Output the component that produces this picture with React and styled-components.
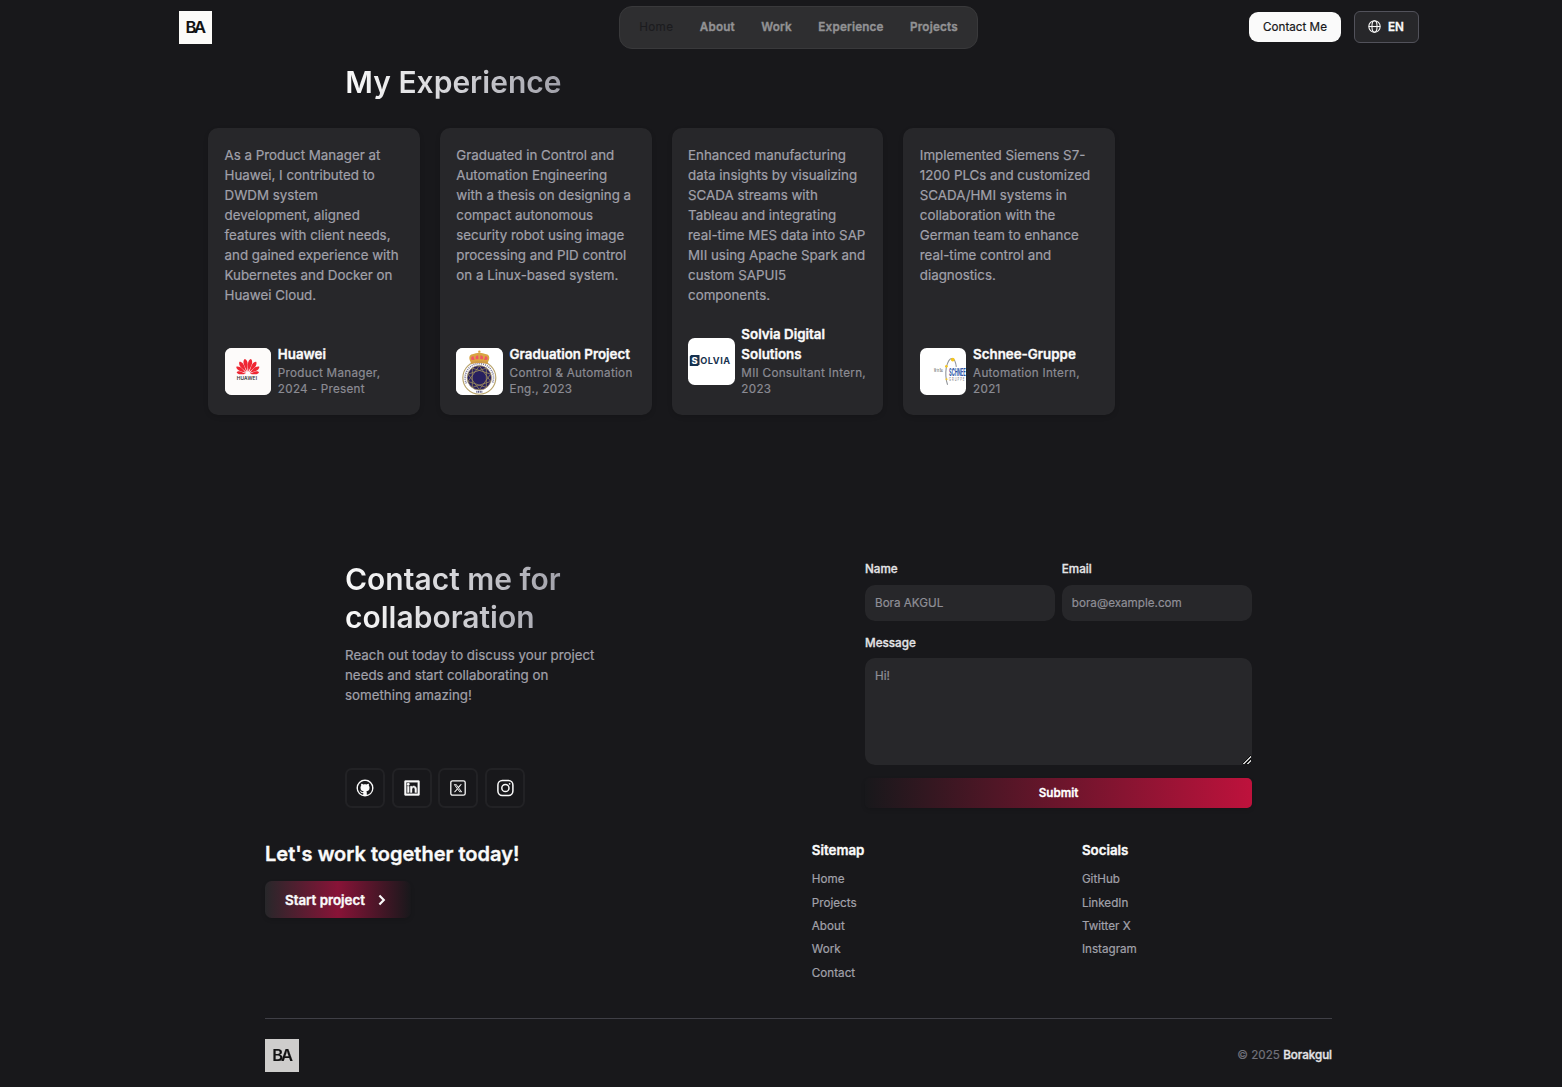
import React from "react";
import styled, { createGlobalStyle, css } from "styled-components";
import { BsGithub, BsTwitterX } from "react-icons/bs";
import { RiLinkedinBoxLine } from "react-icons/ri";

const Global = createGlobalStyle`
  *, *::before, *::after { box-sizing: border-box; }
  body {
    margin: 0;
    background: #18181b;
    color: #fafafa;
    font-family: Inter, "Liberation Sans", sans-serif;
    font-size: 13.333px;
    line-height: 20px;
    overflow: hidden;
    -webkit-text-stroke: 0.2px;
  }
  h1, h2, h3, p, ul { margin: 0; padding: 0; }
  ul { list-style: none; }
  a { color: inherit; text-decoration: none; }
  svg text { -webkit-text-stroke: 0; }
`;

const strong = css`
  font-weight: 600;
  -webkit-text-stroke: 0.35px;
`;

const Page = styled.div`
  width: 1597px;
  height: 1087px;
  display: flex;
  flex-direction: column;
  overflow: hidden;
`;

const Header = styled.header`
  width: 1240px;
  height: 55px;
  margin: 0 auto;
  display: grid;
  grid-template-columns: 1fr auto 1fr;
  align-items: center;
  flex: none;
`;

const LogoBox = styled.a`
  display: flex;
  align-items: center;
  justify-content: center;
  width: ${(p) => (p.$dim ? 34 : 33.33)}px;
  height: 33.33px;
  padding: 0 1px 1px 0;
  background: #fcfbf9;
  color: #111;
  font-size: 16.5px;
  font-weight: 600;
  -webkit-text-stroke: 0.1px;
  letter-spacing: -2.2px;
  opacity: ${(p) => (p.$dim ? 0.8 : 1)};
`;

const Nav = styled.nav`
  display: flex;
  height: 43px;
  padding: 0 6px 2px;
  align-items: center;
  background: #2e2e30;
  border: 1px solid #39393b;
  border-radius: 13px;
`;

const NavLink = styled.a`
  padding: 0 13.2px;
  font-size: 11.667px;
  ${strong}
  letter-spacing: 0.2px;
  color: #929294;
  ${(p) =>
    p.$active &&
    css`
      font-weight: 400;
      letter-spacing: 0.4px;
      color: #1c1c1f;
      -webkit-text-stroke: 0.1px;
    `}
`;

const HeaderActions = styled.div`
  display: flex;
  justify-content: flex-end;
  align-items: center;
  gap: 13px;
  padding-bottom: 1.4px;
`;

const ContactButton = styled.a`
  display: flex;
  align-items: center;
  justify-content: center;
  width: 92px;
  height: 30px;
  padding-left: 1px;
  border-radius: 9px;
  background: #fafafa;
  color: #18181b;
  font-size: 11.667px;
`;

const LangButton = styled.button`
  display: flex;
  align-items: center;
  justify-content: center;
  gap: 7px;
  width: 65px;
  height: 32px;
  padding: 0;
  border: 1px solid #52525b;
  border-radius: 6px;
  background: #27272a;
  color: #fafafa;
  font: 600 11.667px Inter, sans-serif;
  -webkit-text-stroke: 0.3px;
`;

const Title = styled.h2`
  width: fit-content;
  font-size: 30px;
  line-height: 38px;
  font-weight: 600;
  -webkit-text-stroke: 0;
  background: linear-gradient(to right, #fafafa 0%, #d4d4d8 50%, #a1a1aa 100%);
  background-clip: text;
  -webkit-background-clip: text;
  color: transparent;
`;

const Experience = styled.section`
  padding: 8px 0 0 208px;
  height: 505px;
  flex: none;
`;

const ExperienceHead = styled.div`
  padding-left: 137.3px;
`;

const Cards = styled.div`
  display: flex;
  gap: 20px;
  margin-top: 27px;
`;

const Card = styled.article`
  width: 211.75px;
  height: 287px;
  padding: 17px 0 16.67px 16.55px;
  border-radius: 10px;
  background: #27272a;
  box-shadow: 0 2px 5px rgba(0, 0, 0, 0.12);
  display: flex;
  flex-direction: column;
  justify-content: space-between;
`;

const Body = styled.p`
  color: #a1a1aa;
  white-space: pre-line;
`;

const Company = styled.div`
  display: flex;
  align-items: center;
  gap: 6.67px;
`;

const CompanyText = styled.div`
  padding-bottom: 1.33px;
`;

const CompanyLogo = styled.figure`
  flex: none;
  margin: 0;
  width: 46.67px;
  height: 46.67px;
  border-radius: 6.67px;
  overflow: hidden;
  background: #fff;
  svg { display: block; width: 100%; height: 100%; }
`;

const CompanyName = styled.h3`
  font-size: 13.333px;
  line-height: 20px;
  margin-bottom: 1px;
  white-space: pre-line;
  ${strong}
`;

const Role = styled.p`
  font-size: 11.667px;
  line-height: 16px;
  letter-spacing: 0.29px;
  color: #8b8b93;
  white-space: pre-line;
`;

const Contact = styled.section`
  width: 907px;
  height: 248px;
  margin: 0 auto;
  display: flex;
  justify-content: space-between;
  flex: none;
`;

const ContactInfo = styled.div`
  display: flex;
  flex-direction: column;
  justify-content: space-between;
`;

const Reach = styled(Body)`
  margin-top: 9px;
`;

const Socials = styled.div`
  display: flex;
  gap: 6.67px;
`;

const SocialButton = styled.a`
  display: grid;
  place-items: center;
  width: 40px;
  height: 40px;
  border: 2px solid #222225;
  border-radius: 6.67px;
  color: #fafafa;
`;

const Form = styled.form`
  width: 387px;
  display: flex;
  flex-direction: column;
`;

const FieldRow = styled.div`
  display: grid;
  grid-template-columns: 1fr 1fr;
  gap: 6.67px;
  margin-bottom: 13.3px;
`;

const Field = styled.label`
  display: flex;
  flex-direction: column;
  padding-top: 1px;
  font-size: 11.667px;
  line-height: 17px;
  font-weight: 500;
  color: #e4e4e7;
  -webkit-text-stroke: 0.3px;
`;

const control = css`
  display: block;
  width: 100%;
  border: 0;
  outline: 0;
  border-radius: 10px;
  background: #27272a;
  color: #fafafa;
  font: 400 11.667px/17px Inter, sans-serif;
  -webkit-text-stroke: 0.2px;
  &::placeholder { color: #8f8f97; opacity: 1; }
`;

const Input = styled.input`
  ${control}
  height: 36px;
  margin-top: 7px;
  padding: 0 10px;
`;

const TextArea = styled.textarea`
  ${control}
  height: 107px;
  margin-top: 5.7px;
  padding: 10px;
  resize: both;
  &::-webkit-resizer {
    background: linear-gradient(
        135deg,
        transparent 46%,
        #0c0c0d 46%,
        #0c0c0d 54%,
        #c8c8c8 54%,
        #c8c8c8 66%,
        #111 66%,
        #111 76%,
        #c8c8c8 76%,
        #c8c8c8 86%,
        transparent 86%
      )
      5px 5px / 9px 9px no-repeat;
  }
`;

const Submit = styled.button`
  height: 30px;
  margin-top: 13px;
  border: 0;
  border-radius: 5px;
  background: linear-gradient(to right, #18181b, #be123c);
  box-shadow: 0 2px 4px rgba(0, 0, 0, 0.12);
  color: #fff;
  font: 600 11.667px Inter, sans-serif;
  -webkit-text-stroke: 0.3px;
`;

const Footer = styled.footer`
  width: 1067px;
  margin: 0 auto;
  padding-top: 32px;
`;

const FooterTop = styled.div`
  display: grid;
  grid-template-columns: 1fr 1fr;
  gap: 26.67px;
  height: 178px;
`;

const Pitch = styled.h2`
  padding-top: 1px;
  font-size: 20px;
  line-height: 27px;
  ${strong}
`;

const StartButton = styled.a`
  display: flex;
  align-items: center;
  gap: 9px;
  width: 146px;
  height: 37px;
  margin-top: 13px;
  padding-left: 20px;
  border-radius: 6.67px;
  background: linear-gradient(to right, #27272a, #881337 50%, #18181b);
  box-shadow: 0 2px 4px rgba(0, 0, 0, 0.12);
  ${strong}
`;

const LinkColumns = styled.div`
  display: grid;
  grid-template-columns: 1fr 1fr;
  gap: 20px;
`;

const ColumnTitle = styled.h3`
  font-size: 13.333px;
  line-height: 20px;
  margin-bottom: 8.4px;
  ${strong}
`;

const FooterLink = styled.li`
  font-size: 11.667px;
  line-height: 23.33px;
  color: #a1a1aa;
`;

const FooterBottom = styled.div`
  display: flex;
  justify-content: space-between;
  align-items: center;
  border-top: 1px solid #3f3f46;
  padding-top: 20px;
`;

const Copyright = styled.p`
  padding-bottom: 2px;
  font-size: 11.667px;
  color: #71717a;
  span {
    color: #e4e4e7;
    font-weight: 500;
    letter-spacing: -0.05px;
    -webkit-text-stroke: 0.35px;
  }
`;

const Globe = () => (
  <svg width="13" height="13" viewBox="0 0 24 24" fill="none" stroke="currentColor" strokeWidth="2">
    <circle cx="12" cy="12" r="10.5" />
    <ellipse cx="12" cy="12" rx="4.7" ry="10.5" />
    <path d="M1.5 12h21" />
  </svg>
);

const Chevron = () => (
  <svg width="16" height="16" viewBox="0 0 16 16" fill="none" stroke="currentColor" strokeWidth="2.2">
    <path d="M5.4 3.5 9.8 8l-4.4 4.5" />
  </svg>
);

const GithubMark = () => (
  <svg width="18" height="18" viewBox="0 0 18 18">
    <circle cx="9" cy="9" r="8.5" fill="currentColor" />
    <BsGithub x="1.9" y="1.9" size="14.2" color="#18181b" />
  </svg>
);

const XMark = () => (
  <svg width="16" height="16" viewBox="0 0 16 16">
    <rect x="0.8" y="0.8" width="14.4" height="14.4" rx="1.8" fill="none" stroke="currentColor" strokeWidth="1.3" />
    <BsTwitterX x="3.6" y="3.9" size="8.8" color="#fafafa" />
  </svg>
);

const InstagramMark = () => (
  <svg width="18" height="18" viewBox="0 0 18 18" fill="none" stroke="currentColor" strokeWidth="1.5">
    <rect x="1.9" y="1.5" width="15" height="15" rx="4.4" />
    <circle cx="9.4" cy="9" r="3.6" />
    <circle cx="13.6" cy="4.8" r="0.9" fill="currentColor" stroke="none" />
  </svg>
);

const petals = [
  [-80, 0.76],
  [-57, 0.92],
  [-34, 1],
  [-11.5, 1.04],
  [11.5, 1.04],
  [34, 1],
  [57, 0.92],
  [80, 0.76],
];

const HuaweiLogo = () => (
  <svg viewBox="0 0 47 47">
    <rect width="47" height="47" fill="#fdfbfa" />
    {petals.map(([angle, size]) => (
      <path
        key={angle}
        d="M0 -2.5C-.6 -5 -2.4 -8.6 -2.3 -11.4C-2 -13.6 -.8 -14.8 0 -15C.8 -14.8 2 -13.6 2.3 -11.4C2.4 -8.6 .6 -5 0 -2.5Z"
        fill="#ef2733"
        transform={`translate(23 26.4) rotate(${angle}) scale(${size * 0.86} ${size})`}
      />
    ))}
    <text x="11.8" y="32.2" fontSize="4.9" fontWeight="600" letterSpacing=".15" fontFamily="Inter" fill="#333">HUAWEI</text>
  </svg>
);

const star = Array.from({ length: 10 }, (_, i) => {
  const a = (i * 3 * Math.PI) / 5 - Math.PI / 2;
  return `${23.5 + 12 * Math.cos(a)},${30 + 12 * Math.sin(a)}`;
}).join(" ");

const UniversityLogo = () => (
  <svg viewBox="0 0 47 47">
    <rect width="47" height="47" fill="#fff" />
    <circle cx="23.5" cy="30" r="16.6" fill="#fff" stroke="#b9a46c" strokeWidth="1.2" />
    <path d="M10.4 35.7A14.3 14.3 0 1 1 36.6 35.7" fill="none" stroke="#7a789a" strokeWidth="1.7" strokeDasharray="1 1" />
    <circle cx="23.5" cy="30" r="12.3" fill="#28205f" stroke="#b9a46c" strokeWidth=".7" />
    <polygon points={star} fill="none" stroke="#a3935f" strokeWidth=".75" />
    <circle cx="23.5" cy="30" r="3.6" fill="#28205f" />
    <path d="M15 14.6C12.5 10.8 13 7 16.5 6.4C19 5.2 21 5 23.5 4.7C26 5 28 5.2 30.5 6.4C34 7 34.5 10.8 32 14.6Q23.5 12.8 15 14.6Z" fill="#d9a443" />
    <path d="M15.4 11.8Q14.6 8.8 17.4 8L18.8 12ZM20 11.3Q18.8 8.2 22.3 7.4L22.7 11.2ZM24.3 11.2L24.7 7.4Q28.2 8.2 27 11.3ZM28.2 12L29.6 8Q32.4 8.8 31.6 11.8Z" fill="#f05565" />
    <path d="M14.8 14.2Q23.5 12 32.2 14.2L31.8 16Q23.5 14 15.2 16Z" fill="#cf9a45" />
    <circle cx="23.5" cy="3.7" r="1.2" fill="#d9a443" />
    <path d="M20.5 44.1h6" stroke="#4f4c76" strokeWidth="2" strokeDasharray="1.1 .6" />
  </svg>
);

const SolviaLogo = () => (
  <svg viewBox="0 0 47 47">
    <path d="M3.2 17H11.6V26.4L10 28.2H1.8V18.4Z" fill="#17324f" />
    <text x="3.6" y="26" fontSize="9.4" fontWeight="800" fontFamily="Inter" fill="#fff">S</text>
    <text x="12.3" y="26" fontSize="9.2" fontWeight="700" letterSpacing=".55" fontFamily="Inter" fill="#17324f">OLVIA</text>
  </svg>
);

const SchneeLogo = () => (
  <svg viewBox="0 0 47 47">
    <path d="M27.8 37Q25 29 26.5 19.5Q28.6 10.5 32.2 10.5Q35.5 10.6 36.6 19" fill="none" stroke="#909399" strokeWidth="1.1" />
    <circle cx="33" cy="11.6" r="1.9" fill="#f4c51f" />
    <circle cx="26.6" cy="18.5" r="1.3" fill="#f4c51f" />
    <circle cx="26.7" cy="31.5" r="1" fill="#f4c51f" />
    <g transform="translate(14 24.4) scale(.42 1)">
      <text fontSize="4.2" fontFamily="Inter" fill="#333">Wir im Bau</text>
    </g>
    <g transform="translate(29.2 28) scale(.385 1)">
      <text fontSize="10.6" fontWeight="700" fontFamily="Inter" fill="#2950a4">SCHNEE</text>
    </g>
    <g transform="translate(29.3 33.4) scale(.5 1)">
      <text fontSize="5.2" letterSpacing="2" fontFamily="Inter" fill="#777">GRUPPE</text>
    </g>
  </svg>
);

const jobs = [
  {
    text: "As a Product Manager at\nHuawei, I contributed to\nDWDM system\ndevelopment, aligned\nfeatures with client needs,\nand gained experience with\nKubernetes and Docker on\nHuawei Cloud.",
    name: "Huawei",
    role: "Product Manager,\n2024 - Present",
    Logo: HuaweiLogo,
  },
  {
    text: "Graduated in Control and\nAutomation Engineering\nwith a thesis on designing a\ncompact autonomous\nsecurity robot using image\nprocessing and PID control\non a Linux-based system.",
    name: "Graduation Project",
    role: "Control & Automation\nEng., 2023",
    Logo: UniversityLogo,
  },
  {
    text: "Enhanced manufacturing\ndata insights by visualizing\nSCADA streams with\nTableau and integrating\nreal-time MES data into SAP\nMII using Apache Spark and\ncustom SAPUI5\ncomponents.",
    name: "Solvia Digital\nSolutions",
    role: "MII Consultant Intern,\n2023",
    Logo: SolviaLogo,
  },
  {
    text: "Implemented Siemens S7-\n1200 PLCs and customized\nSCADA/HMI systems in\ncollaboration with the\nGerman team to enhance\nreal-time control and\ndiagnostics.",
    name: "Schnee-Gruppe",
    role: "Automation Intern,\n2021",
    Logo: SchneeLogo,
  },
];

const columns = [
  { title: "Sitemap", links: ["Home", "Projects", "About", "Work", "Contact"] },
  { title: "Socials", links: ["GitHub", "LinkedIn", "Twitter X", "Instagram"] },
];

export default function App() {
  return (
    <>
      <Global />
      <Page>
        <Header>
          <LogoBox>BA</LogoBox>
          <Nav>
            {["Home", "About", "Work", "Experience", "Projects"].map((item) => (
              <NavLink key={item} $active={item === "Home"}>{item}</NavLink>
            ))}
          </Nav>
          <HeaderActions>
            <ContactButton>Contact Me</ContactButton>
            <LangButton><Globe />EN</LangButton>
          </HeaderActions>
        </Header>

        <Experience>
          <ExperienceHead><Title>My Experience</Title></ExperienceHead>
          <Cards>
            {jobs.map(({ text, name, role, Logo }) => (
              <Card key={name}>
                <Body>{text}</Body>
                <Company>
                  <CompanyLogo><Logo /></CompanyLogo>
                  <CompanyText>
                    <CompanyName>{name}</CompanyName>
                    <Role>{role}</Role>
                  </CompanyText>
                </Company>
              </Card>
            ))}
          </Cards>
        </Experience>

        <Contact>
          <ContactInfo>
            <div>
              <Title>Contact me for<br />collaboration</Title>
              <Reach>{"Reach out today to discuss your project\nneeds and start collaborating on\nsomething amazing!"}</Reach>
            </div>
            <Socials>
              <SocialButton><GithubMark /></SocialButton>
              <SocialButton><RiLinkedinBoxLine size={20} strokeWidth={0.5} /></SocialButton>
              <SocialButton><XMark /></SocialButton>
              <SocialButton><InstagramMark /></SocialButton>
            </Socials>
          </ContactInfo>
          <Form>
            <FieldRow>
              <Field>Name<Input placeholder="Bora AKGUL" /></Field>
              <Field>Email<Input placeholder="bora@example.com" /></Field>
            </FieldRow>
            <Field>Message<TextArea placeholder="Hi!" /></Field>
            <Submit type="button">Submit</Submit>
          </Form>
        </Contact>

        <Footer>
          <FooterTop>
            <div>
              <Pitch>Let's work together today!</Pitch>
              <StartButton>Start project<Chevron /></StartButton>
            </div>
            <LinkColumns>
              {columns.map(({ title, links }) => (
                <div key={title}>
                  <ColumnTitle>{title}</ColumnTitle>
                  <ul>{links.map((l) => <FooterLink key={l}>{l}</FooterLink>)}</ul>
                </div>
              ))}
            </LinkColumns>
          </FooterTop>
          <FooterBottom>
            <LogoBox $dim>BA</LogoBox>
            <Copyright>© 2025 <span>Borakgul</span></Copyright>
          </FooterBottom>
        </Footer>
      </Page>
    </>
  );
}
